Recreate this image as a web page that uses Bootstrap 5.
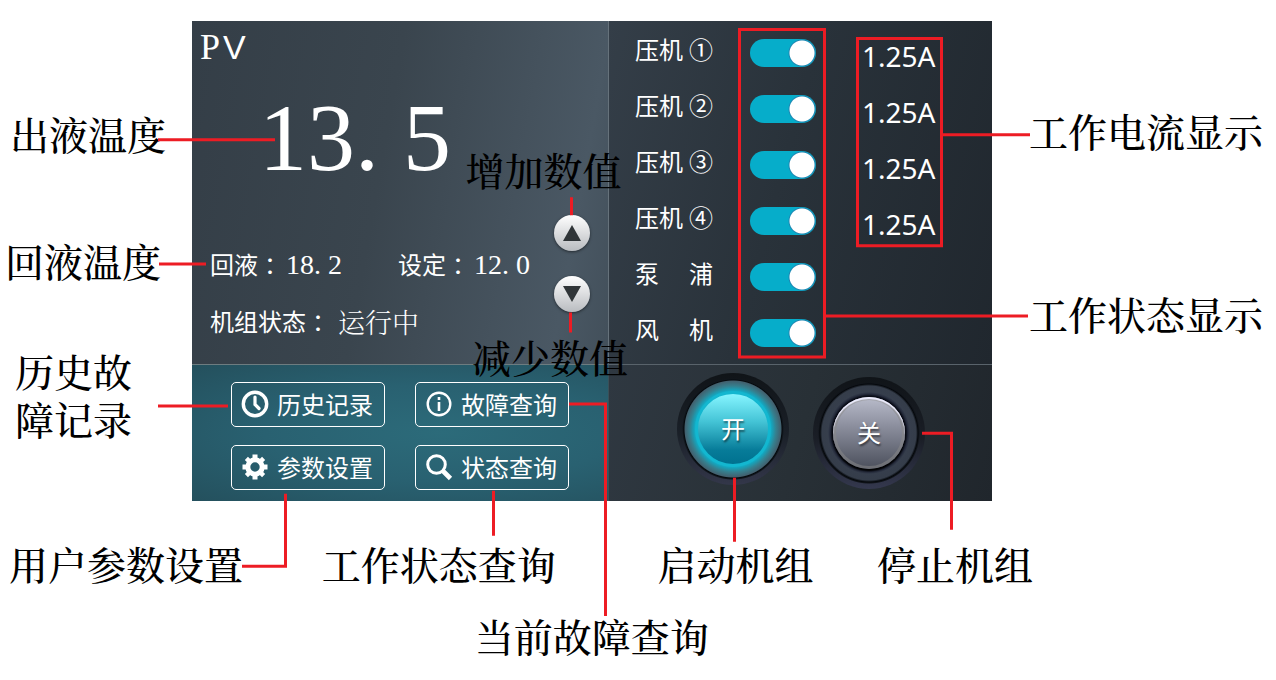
<!DOCTYPE html>
<html lang="zh-CN">
<head>
<meta charset="utf-8">
<meta name="viewport" content="width=device-width, initial-scale=1">
<title>机组控制面板说明</title>
<link href="https://cdn.jsdelivr.net/npm/bootstrap@5.3.0/dist/css/bootstrap.min.css" rel="stylesheet">
<style>
body{background:#fff;font-family:"Noto Sans","Noto Sans CJK SC",sans-serif}
.guide{padding:21px 0 22px}
.guide-main{display:grid;grid-template-columns:192fr 800fr 284fr}
.note{font:500 39px/48px "Noto Serif CJK SC","Noto Sans CJK SC",serif;color:#000;white-space:nowrap}
.notes-left{padding:88px 0 0 10px}
.note-return{margin:79px 0 0 -5px}
.note-history{margin:62px 0 0 5px}
.notes-right{padding:85px 0 0 37px}
.note-status{margin-top:135px}
.notes-bottom{display:grid;grid-template-columns:315fr 332fr 221fr 408fr;padding:38px 0 24px 9px}
.notes-bottom .note:nth-child(n+3){padding-left:6px}
.note-last{padding-left:37.2%}
.note-over{position:absolute;z-index:2}
.note-up{left:34.2%;top:124px}
.note-down{left:35%;top:311px}
.leads{position:absolute;inset:0;width:100%;height:100%;z-index:3;pointer-events:none;fill:none;stroke:#ed1c24;stroke-width:3}
.panel{display:grid;grid-template-columns:417fr 383fr;grid-template-rows:343px 137px;color:#fff;font-size:24px;line-height:36px;background:#232a31}
.pane-pv{background:linear-gradient(100deg,#343e47 0%,#3a454e 45%,#4a5864 88%,#424f5a 100%);border-right:1px solid #66727b;padding-left:8px}
.pane-menu{background:radial-gradient(ellipse at 60% 50%,#2c6b7a 0%,#296171 50%,#24505d 100%);border-top:1px solid #6d7c80;border-right:1px solid #3a5058;padding:17px 39px 0 39px}
.pane-run{background:linear-gradient(105deg,#343e48 0%,#29323a 45%,#20272e 100%);padding:1px 0 0 26px}
.pane-power{background:linear-gradient(105deg,#2f3841 0%,#283036 50%,#20262c 100%);border-top:1px solid #59636b;padding:8px 0 0 68px}
.tag-pv{font:36px/52px "Liberation Serif",serif}
.tag-pv span{font-family:"Liberation Sans",sans-serif;font-size:34px;margin-left:3px}
.big-temp{font:96px/96px "Liberation Serif",serif;padding:17px 0 0 59px}
.big-temp span{display:inline-block;width:48px}
.reading{font:28px/36px "Liberation Serif",serif}
.reading span{display:inline-block;width:14px}
.colon{font-family:"Noto Sans CJK TC",sans-serif}
.info{padding:0 18px 0 10px}
.readouts{padding-top:61px}
.state-row{margin-top:21px}
.run-state{font-size:27px;font-weight:300;font-family:"Noto Serif CJK SC","Noto Sans CJK SC",serif}
.steps{gap:25px;margin-top:29px}
.step{width:36px;height:36px;border:0;border-radius:50%;padding:0;background:linear-gradient(#fff,#b9bcc0);box-shadow:0 1px 3px #0008;display:grid;place-items:center}
.menu-grid{display:grid;grid-template-columns:1fr 1fr;gap:18px 30px}
.menu-btn{height:45px;border:1px solid #fff;border-radius:5px;background:transparent;color:#fff;font:24px/36px "Noto Sans CJK SC",sans-serif;padding:0 0 2px 9px;display:flex;align-items:center;gap:8px;white-space:nowrap}
.unit{display:grid;grid-template-columns:115fr 112fr 130fr;height:56px}
.unit label{width:78px;padding-bottom:2px;display:flex;justify-content:space-between;align-items:center;font-family:"Noto Sans CJK SC",sans-serif}
.unit .form-check-input{width:66px;height:28px;margin:17px 0 0;border:0;border-radius:14px;background-color:#06adca;background-image:radial-gradient(circle at 52px 14px,#fff 12px,#1c87b3 13px,#06adca 14px)}
.amps{font:28px/44px "Noto Sans",sans-serif;padding-top:12px}
.knob{width:112px;height:112px;border:0;border-radius:50%;padding:0;color:#fff;font:24px/24px "Noto Sans CJK SC",sans-serif;text-shadow:1px 2px 2px #0008;display:grid;place-items:center}
.knob span{width:72px;height:72px;border-radius:50%;display:grid;place-items:center;padding-bottom:3px}
.knob-on{background:radial-gradient(circle,#13bfd8 36px,#16a3bb 39px,#35808f 43px,#42606e 48px,#05090d 49px,#10161c 50px,transparent 51px),linear-gradient(#101418,#1a2028 55%,#33374a)}
.knob-on span{width:76px;height:76px;border:3px solid #13b7d0;background:linear-gradient(#86f5ff,#43c3d5 40%,#077c99 80%,#00718f)}
.knob-off{background:radial-gradient(circle,#0a0d18 37px,#252b3c 39px,#363e4c 41px,#353d4a 47px,#05080c 49px,#10141a 50px,transparent 51px),linear-gradient(#101418,#1a1e26 55%,#34384e)}
.knob-off span{background:linear-gradient(#b9bccb,#8c8f9e 40%,#4b4f5b);box-shadow:inset 0 2px 1px #eef,inset 0 0 0 3px #8888,0 2px 2px #000}
</style>
</head>
<body>
<main class="guide position-relative">
  <div class="guide-main">
    <div class="notes-left d-flex flex-column">
      <div class="note">出液温度</div>
      <div class="note note-return">回液温度</div>
      <div class="note note-history">历史故<br>障记录</div>
    </div>
    <section class="panel position-relative">
      <div class="pane-pv">
        <div class="tag-pv">P<span>V</span></div>
        <div class="big-temp"><span class="text-center">1</span><span class="text-center">3</span><span>.</span><span class="text-center">5</span></div>
        <div class="info d-flex justify-content-between">
          <div class="readouts flex-grow-1">
            <div class="row g-0">
              <div class="col-6 d-flex">回液<span class="colon">：</span><div class="reading ps-1">18<span>.</span>2</div></div>
              <div class="col-6 d-flex ps-3">设定<span class="colon">：</span><div class="reading ps-1">12<span>.</span>0</div></div>
            </div>
            <div class="state-row d-flex align-items-center">机组状态<span class="colon">：</span><span class="run-state ps-2">运行中</span></div>
          </div>
          <div class="steps d-flex flex-column">
            <button class="step" type="button" aria-label="增加"><svg width="18" height="16"><path d="M9 0 18 16H0Z" fill="#303538"/></svg></button>
            <button class="step" type="button" aria-label="减少"><svg width="18" height="16"><path d="M0 0H18L9 16Z" fill="#303538"/></svg></button>
          </div>
        </div>
      </div>
      <div class="pane-run">
        <div class="unit"><label for="u1">压机<span>①</span></label><input class="form-check-input" id="u1" type="checkbox" role="switch" checked><div class="amps">1.25A</div></div>
        <div class="unit"><label for="u2">压机<span>②</span></label><input class="form-check-input" id="u2" type="checkbox" role="switch" checked><div class="amps">1.25A</div></div>
        <div class="unit"><label for="u3">压机<span>③</span></label><input class="form-check-input" id="u3" type="checkbox" role="switch" checked><div class="amps">1.25A</div></div>
        <div class="unit"><label for="u4">压机<span>④</span></label><input class="form-check-input" id="u4" type="checkbox" role="switch" checked><div class="amps">1.25A</div></div>
        <div class="unit"><label for="u5">泵<span>浦</span></label><input class="form-check-input" id="u5" type="checkbox" role="switch" checked></div>
        <div class="unit"><label for="u6">风<span>机</span></label><input class="form-check-input" id="u6" type="checkbox" role="switch" checked></div>
      </div>
      <div class="pane-menu">
        <div class="menu-grid">
          <button class="menu-btn" type="button"><svg width="28" height="28" viewBox="0 0 28 28" fill="none" stroke="#fff"><circle cx="14" cy="14" r="11.7" stroke-width="3.4"/><path d="M14 7v7.500l4 4" stroke-width="3.2" stroke-linecap="round"/></svg>历史记录</button>
          <button class="menu-btn" type="button"><svg width="28" height="28" viewBox="0 0 28 28" fill="none" stroke="#fff"><circle cx="14" cy="14" r="11.3" stroke-width="2.4"/><path d="M14 12v9M14 7v3" stroke-width="2.6"/></svg>故障查询</button>
          <button class="menu-btn" type="button"><svg width="28" height="28" viewBox="0 0 28 28" fill="none" stroke="#fff"><circle cx="14" cy="14" r="7.2" stroke-width="5"/><g stroke-width="5"><path d="M14 1.5v5M14 21.5v5M1.5 14h5M21.5 14h5"/><path d="m5.4 5.4 3 3M19.6 19.6l3 3M22.6 5.4l-3 3M8.4 19.6l-3 3" stroke-width="4.4"/></g></svg>参数设置</button>
          <button class="menu-btn" type="button"><svg width="28" height="28" viewBox="0 0 28 28" fill="none" stroke="#fff"><circle cx="11.5" cy="11.5" r="8.8" stroke-width="3"/><path d="m18 18 7.5 7.5" stroke-width="4.6"/></svg>状态查询</button>
        </div>
      </div>
      <div class="pane-power d-flex gap-4">
        <button class="knob knob-on" type="button"><span>开</span></button>
        <button class="knob knob-off mt-1" type="button"><span>关</span></button>
      </div>
      <div class="note note-over note-up">增加数值</div>
      <div class="note note-over note-down">减少数值</div>
    </section>
    <div class="notes-right d-flex flex-column">
      <div class="note">工作电流显示</div>
      <div class="note note-status">工作状态显示</div>
    </div>
  </div>
  <div class="notes-bottom">
    <div class="note">用户参数设置</div>
    <div class="note">工作状态查询</div>
    <div class="note">启动机组</div>
    <div class="note">停止机组</div>
  </div>
  <div class="note note-last">当前故障查询</div>
  <svg class="leads" viewBox="0 0 1276 680" preserveAspectRatio="none" aria-hidden="true">
    <path d="M158 139.500H275M159 263.500H206M158 405.500H228M571.500 197V215M570.500 312V332M942 134.500H1030M825 315.500H1028M242 565.500H285.500V493M493.500 490V535M569 403.500H605.500V615M734.500 477V541M922 432.500H951.500V529"/>
    <path d="M739.500 29.500H824.500V356.500H739.500ZM857.500 38.500H941.500V245.500H857.500Z"/>
  </svg>
</main>
<script src="https://cdn.jsdelivr.net/npm/bootstrap@5.3.0/dist/js/bootstrap.bundle.min.js"></script>
</body>
</html>
